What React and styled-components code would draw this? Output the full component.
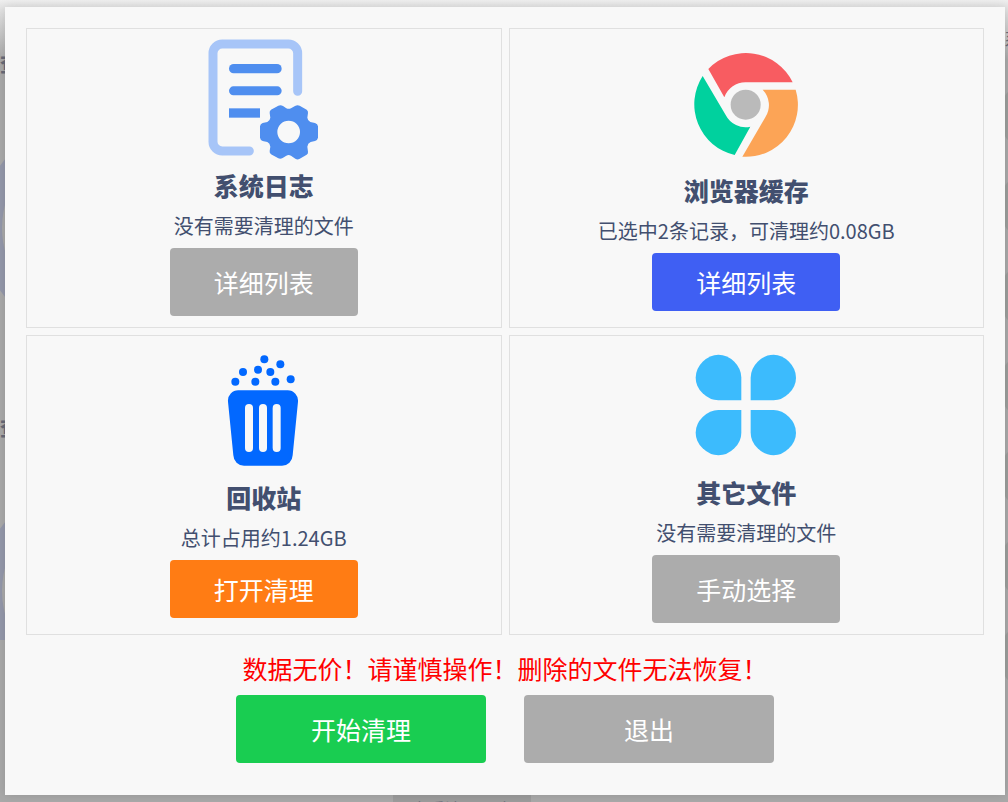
import React from 'react';
import styled, { createGlobalStyle } from 'styled-components';

const GlobalStyle = createGlobalStyle`
    *, *::before {
        box-sizing: border-box;
    }

    body {
        margin: 0;
        font-family: "Noto Sans CJK SC", "Noto Sans", sans-serif;
    }
`

const Page = styled.div`
    position: relative;
    display: flex;
    min-height: 100vh;
    padding: 7px 3px 7px 5px;
    overflow: hidden;
    background: linear-gradient(#efefef 0, #e4e4e4 8px, #a9a9a9 60px);
`

const Backdrop = styled.div`
    position: absolute;
    inset: 0;
    overflow: hidden;
    color: #686a78;
`

const Gauge = styled.div`
    position: absolute;
    left: -19px;
    top: ${props => props.$top}px;
    width: 222px;
    height: ${props => props.$height || 222}px;
    overflow: hidden;

    &::before {
        content: '';
        display: block;
        width: 222px;
        height: 222px;
        border: 21px solid #9498aa;
        border-radius: 50%;
    }
`

const GaugeLabel = styled.span`
    position: absolute;
    left: 0;
    top: ${props => props.$top}px;
    font-size: 20px;
    line-height: 24px;
    font-weight: 900;
`

const SideList = styled.div`
    position: absolute;
    left: calc(100% - 4px);
    top: 90px;
    display: flex;
    flex-direction: column;
    gap: 38px;
`

const SideItem = styled.div`
    width: 120px;
    height: 52px;
    border-radius: 10px;
    background: #9c9e9c;
`

const SideLabel = styled.span`
    position: absolute;
    left: calc(100% - 4px);
    top: 28px;
    font-size: 18px;
    line-height: 20px;
    white-space: nowrap;
`

const LogButton = styled.div`
    position: absolute;
    left: 393px;
    top: calc(100% - 10px);
    width: 138px;
    height: 34px;
    background: #9c9c9c;
    font-size: 17px;
    line-height: 34px;
    text-align: center;
`

const Dialog = styled.main`
    position: relative;
    flex: 1;
    padding: 21px 21px 32px;
    background: #f8f8f8;
    box-shadow: 0 0 10px rgba(0, 0, 0, 0.12);
`

const Grid = styled.div`
    display: grid;
    grid-template-columns: 1fr 1fr;
    gap: 7px;
`

const Card = styled.section`
    display: flex;
    flex-direction: column;
    align-items: center;
    justify-content: center;
    min-height: 300px;
    padding-bottom: 2px;
    border: 1px solid #e0e0e0;
    color: #424f6f;
`

const Icon = styled.svg`
    display: block;
    width: 125px;
    height: 125px;
`

const Title = styled.h2`
    margin: 0;
    font-size: 25px;
    line-height: 42px;
    font-weight: 900;
`

const Detail = styled.p`
    margin: 0 0 2px;
    font-size: 20px;
    line-height: 40px;
`

const Button = styled.button`
    width: ${props => props.$wide ? 250 : 188}px;
    height: ${props => props.$short ? 58 : 68}px;
    padding: 0;
    border: 0;
    border-radius: 4px;
    background: ${props => props.$color || '#acacac'};
    color: #fff;
    font-family: inherit;
    font-size: 25px;
    cursor: pointer;
`

const Warning = styled.p`
    margin: 0;
    padding: 8px 0 2px;
    color: #f00;
    font-size: 25px;
    line-height: 50px;
    text-align: center;
`

const Actions = styled.div`
    display: flex;
    justify-content: center;
    gap: 38px;
`

const LogIcon = () => (
    <Icon viewBox="126 58 375 375" aria-hidden="true">
        <path
            d="M416 215V101a28 28 0 0 0-28-28H190a28 28 0 0 0-28 28V366a28 28 0 0 0 28 28H271"
            fill="none"
            stroke="#a7c5f8"
            strokeWidth="27"
            strokeLinecap="round"
        />
        <g fill="#4f8eef">
            <rect x="210" y="133" width="158" height="28" rx="14" />
            <rect x="210" y="200" width="158" height="27" rx="13.5" />
            <rect x="210" y="266" width="93" height="28" />
            <path
                fillRule="evenodd"
                d="M358 258Q365 255 372 259L382 266Q389 269 396 266L408 259Q415 255 422 258L443 270Q448 274 447 280L445 294Q446 303 454 307L468 310Q476 313 477 320V354Q476 361 468 364L455 367Q446 371 445 381L447 396Q448 402 443 405L421 418Q415 421 409 417L396 408Q389 404 382 408L371 415Q364 419 358 416L336 404Q331 400 332 394L334 381Q333 371 325 367L311 364Q304 361 303 354V320Q304 313 311 310L325 307Q333 303 334 294L332 280Q331 274 336 270ZM389 303a34 34 0 1 0 0 68a34 34 0 1 0 0-68Z"
            />
        </g>
    </Icon>
)

const BrowserIcon = () => (
    <Icon viewBox="72 73 375 375" aria-hidden="true">
        <path fill="#f85c61" d="M145 148A156 156 0 0 1 398 188H258A67 67 0 0 0 193 233Z" />
        <path fill="#fca456" d="M308 210H407A156 156 0 0 1 247 411L316 293A67 67 0 0 0 308 210Z" />
        <path fill="#00d19e" d="M128 169L197 286A67 67 0 0 0 271 321L224 406A156 156 0 0 1 128 169Z" />
        <circle cx="257" cy="255" r="45" fill="#bababa" />
    </Icon>
)

const BinIcon = () => (
    <Icon viewBox="36 34 375 375" aria-hidden="true">
        <g fill="#0268ff">
            <circle cx="226" cy="59" r="12" />
            <circle cx="274" cy="74" r="12" />
            <circle cx="207" cy="90" r="12" />
            <circle cx="162" cy="97" r="12" />
            <circle cx="244" cy="97" r="12" />
            <circle cx="139" cy="126" r="12" />
            <circle cx="199" cy="126" r="12" />
            <circle cx="259" cy="126" r="12" />
            <circle cx="305" cy="119" r="12" />
            <path d="M149 152H296a31 31 0 0 1 31 34L311 347a32 32 0 0 1-32 31H165a32 32 0 0 1-32-31L117 186a31 31 0 0 1 32-34Z" />
        </g>
        <g fill="#f8f8f8">
            <rect x="168" y="193" width="24" height="144" rx="12" />
            <rect x="210" y="193" width="24" height="144" rx="12" />
            <rect x="251" y="193" width="24" height="144" rx="12" />
        </g>
    </Icon>
)

const PetalIcon = () => (
    <Icon viewBox="72 20 375 375" aria-hidden="true">
        <g fill="#3cbbfd">
            <path d="M244 183H175Q150 183 128 162Q107 141 107 115Q107 88 128 67Q150 46 175 46Q202 46 223 67Q244 88 244 115Z" />
            <path d="M272 183H341Q366 183 387 162Q408 141 408 115Q408 88 387 67Q366 46 341 46Q314 46 293 67Q272 88 272 115Z" />
            <path d="M244 212H175Q150 212 128 233Q107 254 107 280Q107 306 128 327Q150 348 175 348Q202 348 223 327Q244 306 244 280Z" />
            <path d="M272 212H341Q366 212 387 233Q408 254 408 280Q408 306 387 327Q366 348 341 348Q314 348 293 327Q272 306 272 280Z" />
        </g>
    </Icon>
)

const cards = [
    { title: '系统日志', detail: '没有需要清理的文件', action: '详细列表', icon: LogIcon },
    { title: '浏览器缓存', detail: '已选中2条记录，可清理约0.08GB', action: '详细列表', icon: BrowserIcon, color: '#3f5ff3' },
    { title: '回收站', detail: '总计占用约1.24GB', action: '打开清理', icon: BinIcon, color: '#ff7c14' },
    { title: '其它文件', detail: '没有需要清理的文件', action: '手动选择', icon: PetalIcon },
]

const App = () => (
    <Page>
        <GlobalStyle />
        <Backdrop aria-hidden="true">
            <GaugeLabel $top={52}>查</GaugeLabel>
            <Gauge $top={117} />
            <GaugeLabel $top={416}>查</GaugeLabel>
            <Gauge $top={480} $height={160} />
            <SideLabel>系统</SideLabel>
            <SideList>
                {[1, 2, 3, 4, 5, 6, 7].map((item) => (
                    <SideItem key={item} />
                ))}
            </SideList>
            <LogButton>查看清理日志</LogButton>
        </Backdrop>
        <Dialog>
            <Grid>
                {cards.map(({ title, detail, action, icon: CardIcon, color }) => (
                    <Card key={title}>
                        <CardIcon />
                        <Title>{title}</Title>
                        <Detail>{detail}</Detail>
                        <Button type="button" $color={color} $short={Boolean(color)}>{action}</Button>
                    </Card>
                ))}
            </Grid>
            <Warning>数据无价！请谨慎操作！删除的文件无法恢复！</Warning>
            <Actions>
                <Button type="button" $wide $color="#19cd51">开始清理</Button>
                <Button type="button" $wide>退出</Button>
            </Actions>
        </Dialog>
    </Page>
)

export default App
